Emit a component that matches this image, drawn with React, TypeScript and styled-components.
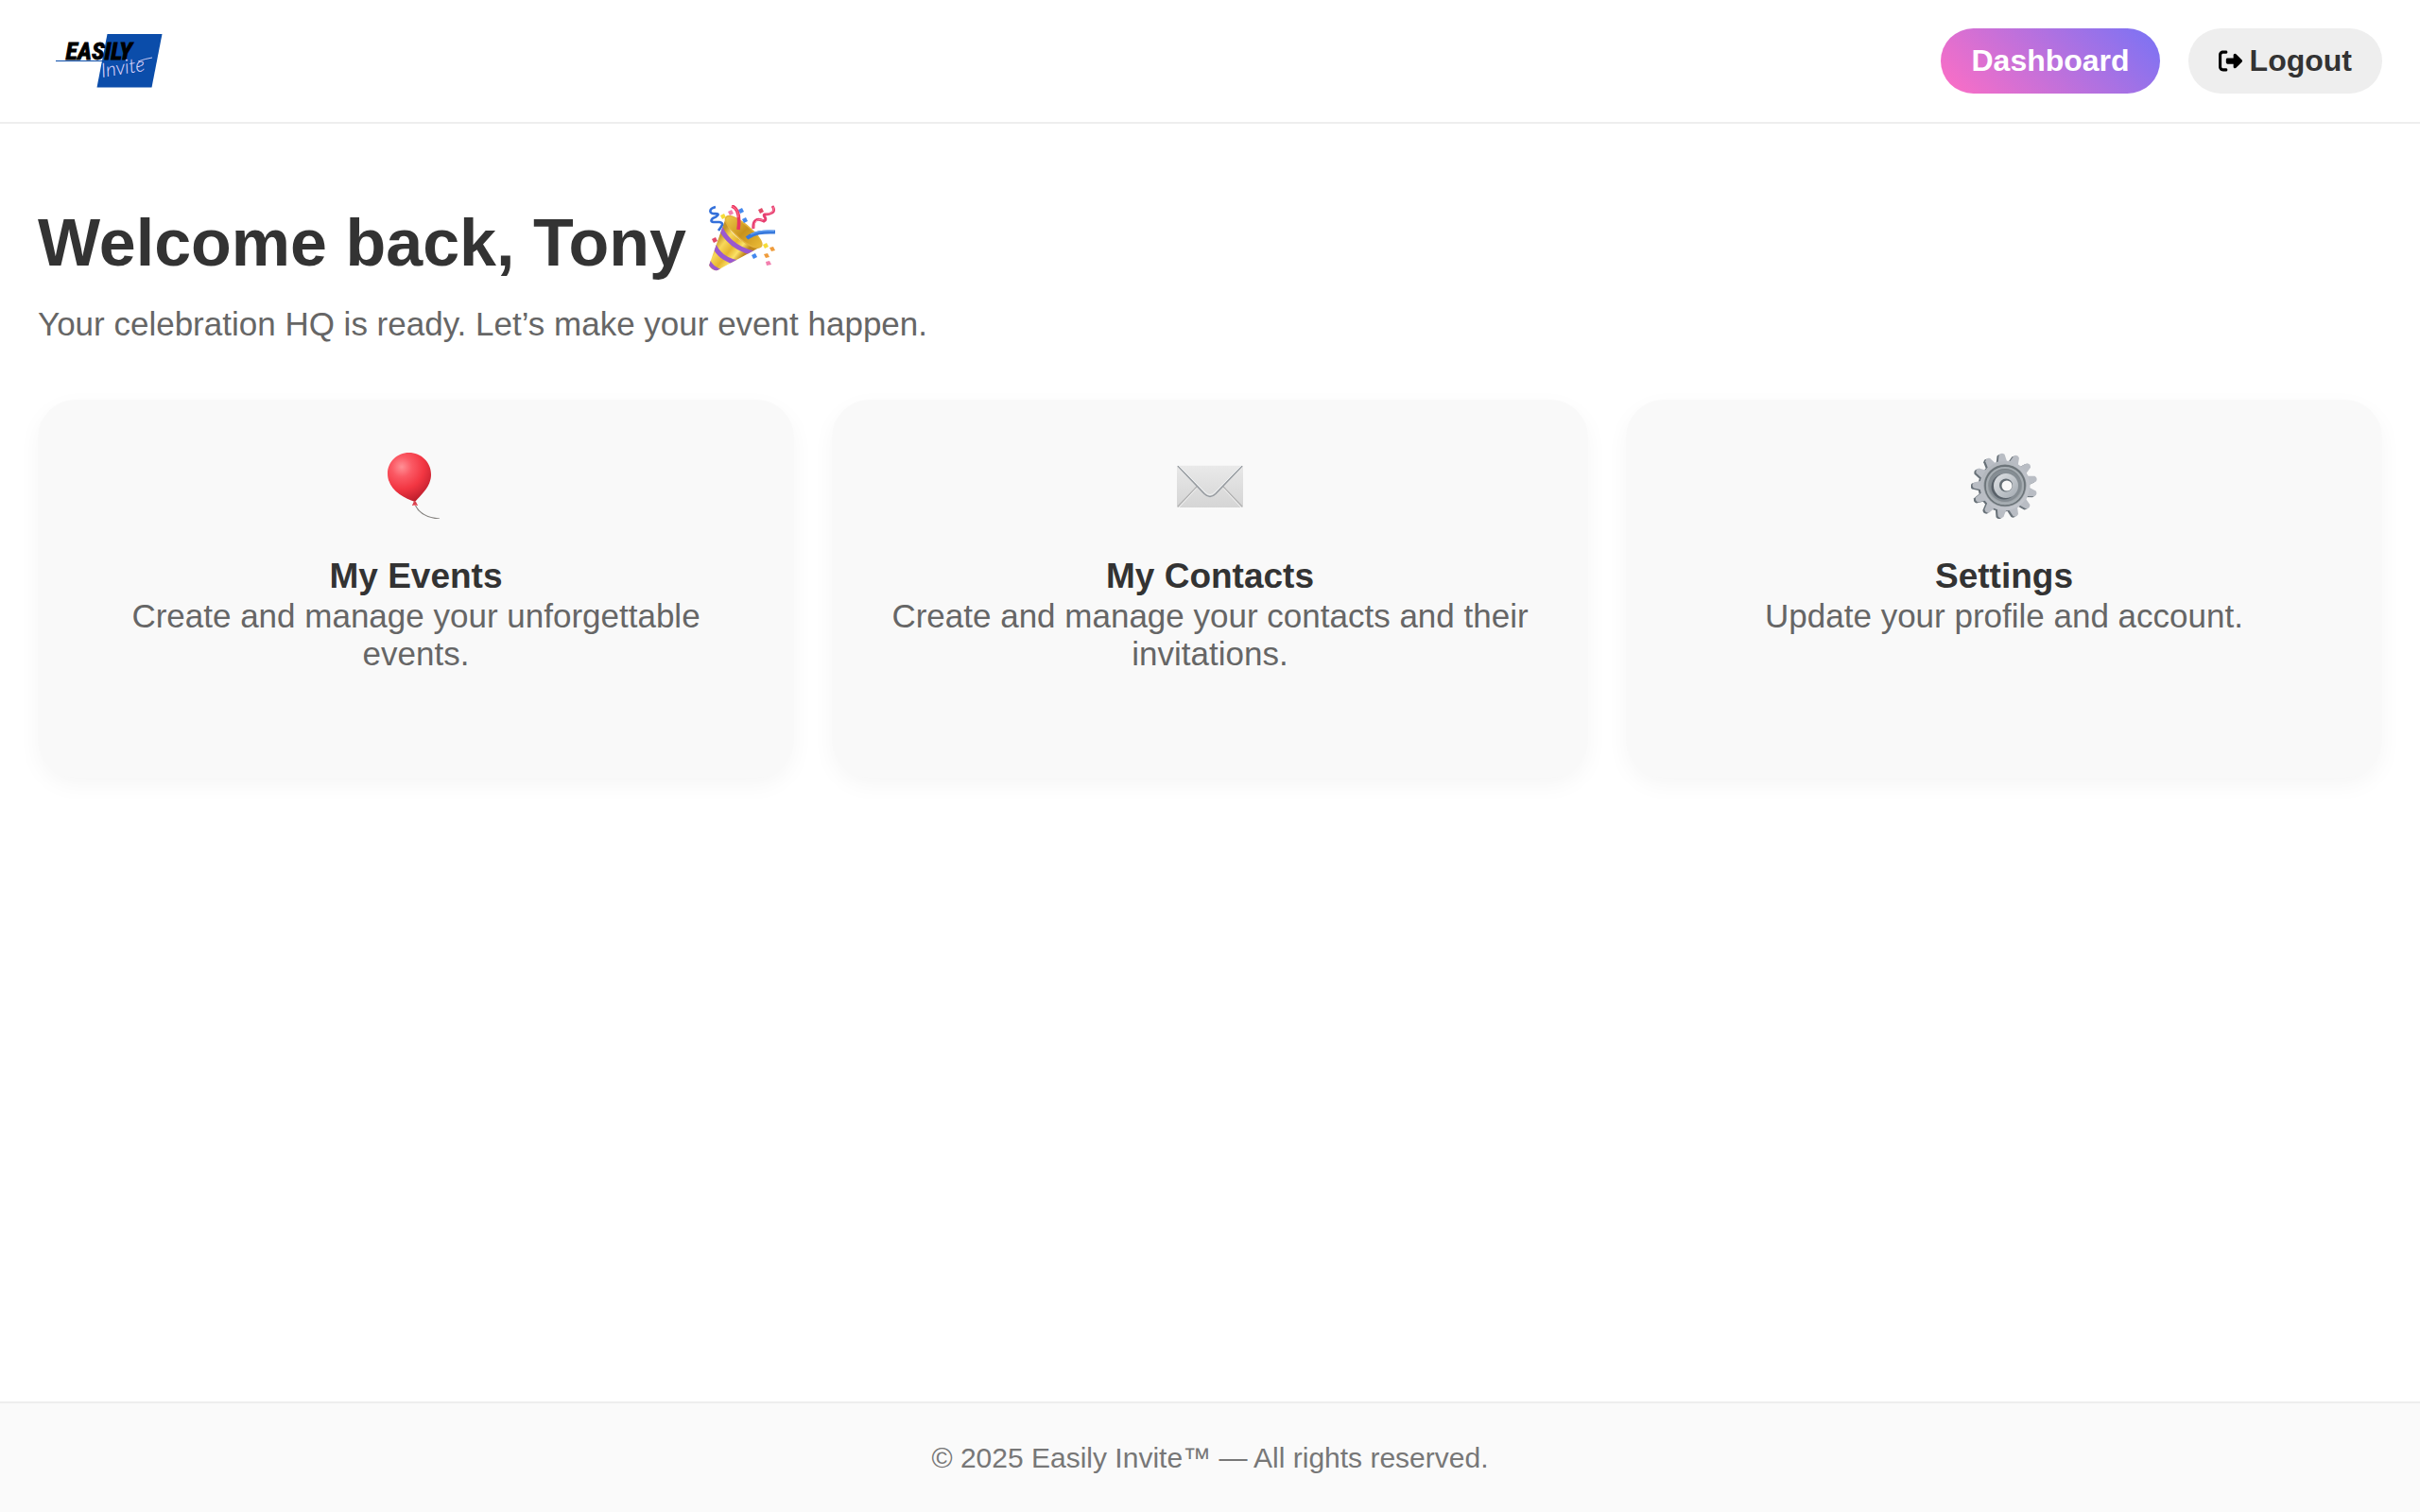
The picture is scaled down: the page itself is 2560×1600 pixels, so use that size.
import React from "react";
import styled, { createGlobalStyle } from "styled-components";
import { FaRightFromBracket } from "react-icons/fa6";

const GlobalStyle = createGlobalStyle`
  *, *::before, *::after { box-sizing: border-box; }
  body {
    margin: 0;
    background: #fff;
    color: #333;
    font-family: "Liberation Sans", Arial, Helvetica, sans-serif;
  }
`;

const Page = styled.div`
  min-height: 100vh;
  display: flex;
  flex-direction: column;
`;

const Header = styled.header`
  display: flex;
  align-items: center;
  justify-content: space-between;
  padding: 30px 40px;
  border-bottom: 2px solid #eee;
`;

const LogoLink = styled.a`
  display: flex;
  svg { display: block; width: 150px; height: 69px; }
`;

const Nav = styled.nav`
  display: flex;
  gap: 30px;
`;

const pill = `
  display: inline-flex;
  align-items: center;
  gap: 8px;
  padding: 16px 32px;
  border: 0;
  border-radius: 40px;
  font-family: inherit;
  font-size: 32px;
  font-weight: 700;
  line-height: 37px;
  text-decoration: none;
  cursor: pointer;
`;

const NavLink = styled.a`
  ${pill}
  color: #fff;
  background: linear-gradient(45deg, #ff6ec4, #7873f5);
`;

const LogoutButton = styled.button`
  ${pill}
  color: #333;
  background: #eee;
  svg { width: 25px; height: 25px; color: #000; }
`;

const Main = styled.main`
  flex: 1;
  padding: 86px 40px 80px;
`;

const Title = styled.h1`
  display: flex;
  align-items: flex-start;
  gap: 24px;
  margin: 0 0 26px;
  font-size: 70px;
  line-height: 80px;
`;

const Lead = styled.p`
  margin: 0 0 60px;
  color: #666;
  font-size: 35px;
  line-height: 40px;
`;

const Cards = styled.div`
  display: grid;
  grid-template-columns: repeat(3, 1fr);
  gap: 40px;
`;

const Card = styled.a`
  display: flex;
  flex-direction: column;
  align-items: center;
  min-height: 400px;
  padding: 56px;
  border-radius: 40px;
  background: #f9f9f9;
  box-shadow: 0 8px 24px rgba(0, 0, 0, 0.04);
  color: inherit;
  text-align: center;
  text-decoration: none;
`;

const Emoji = styled.svg`
  display: block;
  flex: none;
  width: 70px;
  height: 70px;
`;

const CardTitle = styled.h2`
  margin: 39px 0 0;
  font-size: 37px;
  line-height: 44px;
`;

const CardText = styled.p`
  margin: 0;
  color: #666;
  font-size: 35px;
  line-height: 40px;
`;

const Footer = styled.footer`
  padding: 40px;
  border-top: 2px solid #eee;
  background: #fafafa;
  color: #777;
  text-align: center;
  font-size: 30px;
  line-height: 35px;
`;

const Logo = () => (
  <svg viewBox="0 0 150 69" role="img" aria-label="Easily Invite">
    <path d="M73.500 6H131.500L120.500 62.500H62.500Z" fill="#0b4daa" />
    <path d="M19 34.500H72" stroke="#0b4daa" strokeWidth="1.200" />
    <text x="29.500" y="32.500" fontFamily="'Liberation Sans Narrow', 'Roboto Condensed', sans-serif" fontStyle="italic" fontWeight="700" fontSize="26" fill="#000" stroke="#000" strokeWidth="0.900">EASILY</text>
    <text x="68" y="52" transform="rotate(-9 68 52)" fontFamily="Lato, sans-serif" fontStyle="italic" fontWeight="300" fontSize="21" fill="#e2dcff">Invite</text>
    <path d="M106 35Q114 32 121 31" fill="none" stroke="#dcd6fa" strokeWidth="0.900" />
  </svg>
);

const PartyPopper = () => (
  <Emoji viewBox="0 0 70 70" role="img" aria-label="Party popper">
    <defs>
      <linearGradient id="cone" x1="10" y1="34" x2="36" y2="54" gradientUnits="userSpaceOnUse">
        <stop offset="0" stopColor="#c4942a" />
        <stop offset="0.250" stopColor="#f8d85a" />
        <stop offset="0.550" stopColor="#e6b52f" />
        <stop offset="0.780" stopColor="#fbe266" />
        <stop offset="1" stopColor="#bf861c" />
      </linearGradient>
      <linearGradient id="mouth" x1="20" y1="12" x2="54" y2="44" gradientUnits="userSpaceOnUse">
        <stop offset="0" stopColor="#eec648" />
        <stop offset="0.500" stopColor="#c8921c" />
        <stop offset="1" stopColor="#e9b934" />
      </linearGradient>
      <clipPath id="coneClip">
        <path d="M18 13C18 28 36 44 55 44L9 69Q3 70 0 64Z" />
      </clipPath>
    </defs>
    <path d="M18 13C18 28 36 44 55 44L9 69Q3 70 0 64Z" fill="url(#cone)" />
    <g clipPath="url(#coneClip)" fill="none" stroke="#9a58d0">
      <path d="M12 24Q23 46 48 51" strokeWidth="5" />
      <path d="M5 42Q12 58 31 61" strokeWidth="5" />
      <path d="M-1 58Q3 68 14 70" strokeWidth="4" />
    </g>
    <path d="M18 13C21 8 34 16 44 25C53 33 58 41 55 44C50 48 36 40 27 30C20 23 16 16 18 13Z" fill="url(#mouth)" stroke="#e3b23a" strokeWidth="1.500" />
    <path d="M24 1C31 3 33 11 31 26" fill="none" stroke="#e93560" strokeWidth="3.600" />
    <path d="M24 1C29 3 31 8 31 13" fill="none" stroke="#ff6f8c" strokeWidth="1.200" />
    <path d="M40 35C48 29 57 28 70 28.500" fill="none" stroke="#3879dc" strokeWidth="4" />
    <path d="M44 31C52 27 60 26.500 69 27.500" fill="none" stroke="#65a3f4" strokeWidth="1.200" />
    <path d="M7 2C-1 4 0 10 7 9C12 9 9 12 4 14C-1 19 7 18 11 18C17 19 13 23 10 27" fill="none" stroke="#3470da" strokeWidth="2.600" />
    <path d="M67 1C72 8 64 10 59 10C56 11 63 15 58 17C51 13 46 16 47 25" fill="none" stroke="#e63e70" strokeWidth="3" />
    <path d="M68 2C70 8 64 9 60 9M57 16C50 14 48 18 48 24" fill="none" stroke="#ff86a2" strokeWidth="1" />
    <g fill="#4388ee">
      <path d="M31 5l4-2 2 4-4 2zM35 15l4-2 2 4-4 2zM45 53l4-2 2 4-4 2z" />
    </g>
    <g fill="#f27fae">
      <path d="M20 7l4-2 2 4-4 2zM60 60l4-1 2 4-5 1z" />
    </g>
    <g fill="#e24967">
      <path d="M52 5l4-2 2 4-4 2zM3 36l4-2 2 4-4 2z" />
    </g>
    <g fill="#f6dc38">
      <path d="M12 11l4-2 2 4-4 2zM57 42l4-2 2 4-4 2z" />
    </g>
    <g fill="#ef9c3c">
      <path d="M64 45l4-1 2 4-4 1zM58 52l4-1 2 4-4 1z" />
    </g>
  </Emoji>
);

const Balloon = () => (
  <Emoji viewBox="0 0 70 70" role="img" aria-label="Balloon">
    <defs>
      <radialGradient id="rubber" cx="20" cy="15" r="43" gradientUnits="userSpaceOnUse">
        <stop offset="0" stopColor="#ff9096" />
        <stop offset="0.250" stopColor="#fb5964" />
        <stop offset="0.550" stopColor="#f23642" />
        <stop offset="0.820" stopColor="#c82331" />
        <stop offset="1" stopColor="#a51622" />
      </radialGradient>
    </defs>
    <path d="M34 55C38 64 47 69 60 70" fill="none" stroke="#85827f" strokeWidth="1.200" />
    <path d="M27.500 0C40.500 0 51 10 51 23C51 36 41 44 34 52C22 48 5 39 5 22C5 10 15 0 27.500 0Z" fill="url(#rubber)" />
    <path d="M33 51L31 56L37 56L35 52Z" fill="#d9434f" />
    <path d="M32 55.500H36" stroke="#ff8890" strokeWidth="0.800" />
  </Emoji>
);

const Envelope = () => (
  <Emoji viewBox="0 0 70 70" role="img" aria-label="Envelope">
    <defs>
      <linearGradient id="paper" x1="0" y1="0" x2="0" y2="1">
        <stop offset="0" stopColor="#e8e8e8" />
        <stop offset="1" stopColor="#d5d5d5" />
      </linearGradient>
      <linearGradient id="flap" x1="0" y1="0" x2="0" y2="1">
        <stop offset="0" stopColor="#eaeaea" />
        <stop offset="1" stopColor="#dadada" />
      </linearGradient>
    </defs>
    <rect x="0" y="13" width="70" height="45" rx="1" fill="url(#paper)" />
    <path d="M1 57L21 36M69 57L49 36" stroke="#b2b2b2" strokeWidth="1.300" />
    <path d="M2 58L21 37.500M68 58L49 37.500" stroke="#f3f3f3" strokeWidth="1" />
    <path d="M0 13H70L41 43Q35 49 29 43Z" fill="url(#flap)" />
    <path d="M1 14L29 43.500Q35 49.500 41 43.500L69 14" fill="none" stroke="#969ba0" strokeWidth="1.500" />
    <path d="M2 14L30 42Q35 47 40 42L68 14" fill="none" stroke="#f4f6f8" strokeWidth="0.800" />
    <path d="M0 13.500H70" stroke="#f5f5f5" strokeWidth="1" />
  </Emoji>
);

const TEETH = Array.from({ length: 13 }, (_, i) => (i * 360) / 13 - 6);

const GearShape = ({ fill }: { fill: string }) => (
  <g fill={fill}>
    <circle cx="36" cy="35" r="26.500" />
    {TEETH.map((angle) => (
      <path key={angle} d="M31 11L33 2Q36 -1 39 2L41 11Z" transform={`rotate(${angle} 36 35)`} />
    ))}
  </g>
);

const Gear = () => (
  <Emoji viewBox="0 0 70 70" role="img" aria-label="Gear">
    <defs>
      <linearGradient id="steel" x1="10" y1="5" x2="60" y2="65" gradientUnits="userSpaceOnUse">
        <stop offset="0" stopColor="#adb2b7" />
        <stop offset="0.500" stopColor="#bcc0c7" />
        <stop offset="1" stopColor="#c5c8ce" />
      </linearGradient>
      <linearGradient id="dish" x1="0" y1="0" x2="0" y2="1">
        <stop offset="0" stopColor="#747b80" />
        <stop offset="1" stopColor="#a7adb2" />
      </linearGradient>
      <linearGradient id="hub" x1="0" y1="0" x2="1" y2="1">
        <stop offset="0" stopColor="#e0e3e6" />
        <stop offset="1" stopColor="#a3aab1" />
      </linearGradient>
    </defs>
    <g transform="translate(-2 1)"><GearShape fill="#687178" /></g>
    <GearShape fill="#b9bdc4" />
    <circle cx="36" cy="35" r="26" fill="url(#steel)" />
    <circle cx="36" cy="35" r="22.500" fill="url(#dish)" />
    <circle cx="36" cy="35" r="21" fill="none" stroke="#6b7378" strokeWidth="1.500" />
    <circle cx="36" cy="35" r="19" fill="none" stroke="#a6adb2" strokeWidth="2" />
    <circle cx="36" cy="35" r="17" fill="#858d93" />
    <circle cx="35" cy="36" r="13.500" fill="#596169" />
    <circle cx="37" cy="35" r="13" fill="url(#hub)" />
    <circle cx="37" cy="34.500" r="7" fill="#656e75" />
    <circle cx="38" cy="35" r="5.500" fill="#f9f9f9" />
  </Emoji>
);

const CARDS = [
  { title: "My Events", text: "Create and manage your unforgettable events.", href: "#events", Icon: Balloon },
  { title: "My Contacts", text: "Create and manage your contacts and their invitations.", href: "#contacts", Icon: Envelope },
  { title: "Settings", text: "Update your profile and account.", href: "#settings", Icon: Gear },
];

export default function App() {
  return (
    <Page>
      <GlobalStyle />
      <Header>
        <LogoLink href="#home"><Logo /></LogoLink>
        <Nav>
          <NavLink href="#dashboard">Dashboard</NavLink>
          <LogoutButton type="button">
            <FaRightFromBracket aria-hidden />
            Logout
          </LogoutButton>
        </Nav>
      </Header>
      <Main>
        <Title>Welcome back, Tony <PartyPopper /></Title>
        <Lead>Your celebration HQ is ready. Let’s make your event happen.</Lead>
        <Cards>
          {CARDS.map(({ title, text, href, Icon }) => (
            <Card key={title} href={href}>
              <Icon />
              <CardTitle>{title}</CardTitle>
              <CardText>{text}</CardText>
            </Card>
          ))}
        </Cards>
      </Main>
      <Footer>© 2025 Easily Invite™ — All rights reserved.</Footer>
    </Page>
  );
}
